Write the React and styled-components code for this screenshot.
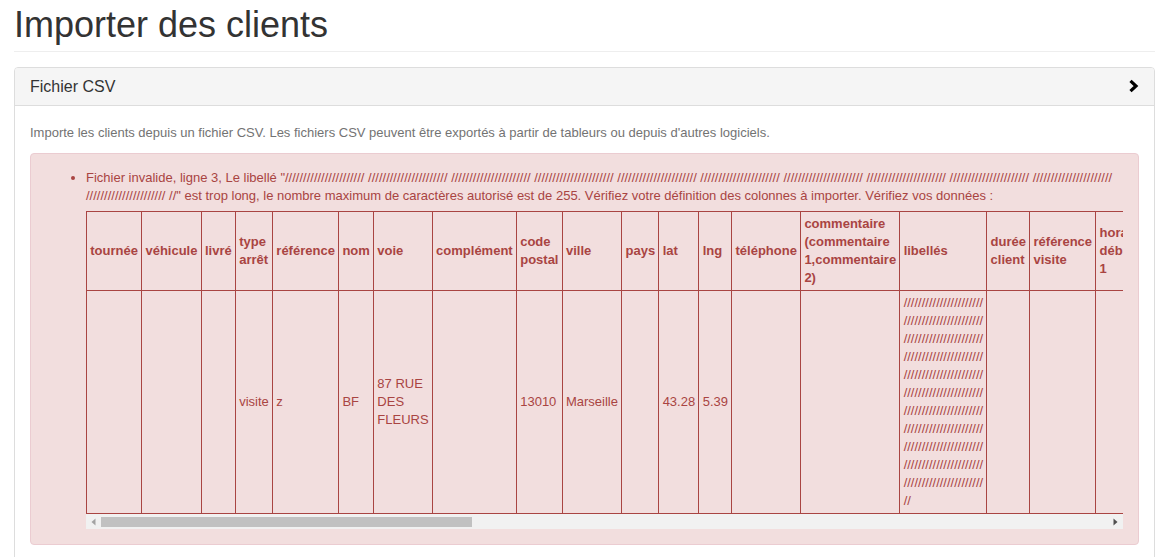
import React from 'react';
import styled, { createGlobalStyle } from 'styled-components';

const GlobalStyle = createGlobalStyle`
  html, body {
    margin: 0;
    padding: 0;
    background: #fff;
  }
  body {
    font-family: "Liberation Sans", "Helvetica Neue", Arial, sans-serif;
    font-size: 13px;
    line-height: 1.4;
    color: #333;
  }
`;

const Page = styled.div`
  padding: 0 17px 0 14px;
`;

const PageHeader = styled.h1`
  margin: 5px 0 15px;
  padding-bottom: 6px;
  border-bottom: 1px solid #eee;
  font-size: 36px;
  font-weight: 400;
  line-height: 1.1;
  color: #333;
`;

const Panel = styled.div`
  border: 1px solid #ddd;
  border-radius: 4px;
  background: #fff;
`;

const PanelHeading = styled.div`
  display: flex;
  align-items: center;
  justify-content: space-between;
  padding: 10px 15px;
  background: #f5f5f5;
  border-bottom: 1px solid #ddd;
  border-radius: 3px 3px 0 0;
`;

const PanelTitle = styled.h3`
  margin: 0;
  font-size: 16px;
  font-weight: 400;
  line-height: 1.1;
  color: #333;
`;

const PanelBody = styled.div`
  padding: 15px;
`;

const HelpText = styled.p`
  margin: 3px 0 11px;
  line-height: 18px;
  color: #737373;
`;

const Alert = styled.div`
  padding: 15px;
  background: #f2dede;
  border: 1px solid #ebccd1;
  border-radius: 4px;
  color: #a94442;
`;

const ErrorList = styled.ul`
  margin: 0;
  padding-left: 40px;
  line-height: 18px;
`;

const TableScroll = styled.div`
  margin-top: 6px;
  overflow: hidden;
`;

const Table = styled.table`
  width: 100%;
  border-collapse: collapse;
  border-spacing: 0;
`;

const Th = styled.th`
  padding: 3px 3.25px;
  border: 1px solid #a94442;
  text-align: left;
  vertical-align: middle;
  font-weight: 700;
  line-height: 18px;
`;

const Td = styled.td`
  padding: 3px 3.25px;
  border: 1px solid #a94442;
  vertical-align: middle;
  line-height: 18px;
`;

const ScrollBar = styled.div`
  display: flex;
  height: 15px;
  background: #f1f1f1;
`;

const ScrollButton = styled.div`
  flex: 0 0 15px;
  display: flex;
  align-items: center;
  justify-content: center;
`;

const ScrollTrack = styled.div`
  flex: 1;
  padding: 3px 0 2px;
`;

const ScrollThumb = styled.div`
  height: 100%;
  background: #c1c1c1;
`;

const Arrow = ({ dir, color }) => (
  <svg width="5" height="8" viewBox="0 0 5 8">
    <polygon points={dir === 'left' ? '0.5,4 4.5,0.5 4.5,7.5' : '4.5,4 0.5,0.5 0.5,7.5'} fill={color} />
  </svg>
);

const Chevron = () => (
  <svg width="11" height="14" viewBox="0 0 11 14">
    <polyline points="2.5,1.8 8,7 2.5,12.2" fill="none" stroke="#000" strokeWidth="3.2" strokeLinejoin="miter" />
  </svg>
);

const chunk = '/'.repeat(22);
const libelle = Array(11).fill(chunk).join(' ') + ' //';

const columns = [
  'tournée', 'véhicule', 'livré', 'type arrêt', 'référence', 'nom', 'voie', 'complément',
  'code postal', 'ville', 'pays', 'lat', 'lng', 'téléphone',
  'commentaire (commentaire 1,commentaire 2)', 'libellés', 'durée client', 'référence visite',
  'horaire début 1', 'horaire fin 1', 'horaire début 2', 'horaire fin 2', 'jours',
  'email', 'téléphone portable', 'contact', 'priorité', 'temps de service',
  'quantité 1', 'quantité 2', 'quantité 3', 'quantité 4', 'quantité 5', 'compétences',
  'référence commande', 'date début', 'date fin', 'zone', 'secteur', 'code client',
  'instructions', 'poids', 'volume', 'colis', 'montant', 'paiement',
];

const row = {
  'type arrêt': 'visite',
  'référence': 'z',
  nom: 'BF',
  voie: '87 RUE DES FLEURS',
  'code postal': '13010',
  ville: 'Marseille',
  lat: '43.28',
  lng: '5.39',
  'libellés': libelle,
};

// visible share of the table width
const thumbShare = 36.8;

const App = () => {
  return (
    <Page>
      <GlobalStyle />
      <PageHeader>Importer des clients</PageHeader>
      <Panel>
        <PanelHeading>
          <PanelTitle>Fichier CSV</PanelTitle>
          <Chevron />
        </PanelHeading>
        <PanelBody>
          <HelpText>
            Importe les clients depuis un fichier CSV. Les fichiers CSV peuvent être exportés à partir de tableurs ou depuis d'autres logiciels.
          </HelpText>
          <Alert>
            <ErrorList>
              <li>
                Fichier invalide, ligne 3, Le libellé "{libelle}" est trop long, le nombre maximum de caractères autorisé est de 255. Vérifiez votre définition des colonnes à importer. Vérifiez vos données :
                <TableScroll>
                  <Table>
                    <thead>
                      <tr>
                        {columns.map(c => (
                          <Th key={c}>{c}</Th>
                        ))}
                      </tr>
                    </thead>
                    <tbody>
                      <tr>
                        {columns.map(c => (
                          <Td key={c}>{row[c] || ''}</Td>
                        ))}
                      </tr>
                    </tbody>
                  </Table>
                </TableScroll>
                <ScrollBar>
                  <ScrollButton>
                    <Arrow dir="left" color="#a3a3a3" />
                  </ScrollButton>
                  <ScrollTrack>
                    <ScrollThumb style={{ width: `${thumbShare}%` }} />
                  </ScrollTrack>
                  <ScrollButton>
                    <Arrow dir="right" color="#505050" />
                  </ScrollButton>
                </ScrollBar>
              </li>
            </ErrorList>
          </Alert>
        </PanelBody>
      </Panel>
    </Page>
  );
};

export default App;
